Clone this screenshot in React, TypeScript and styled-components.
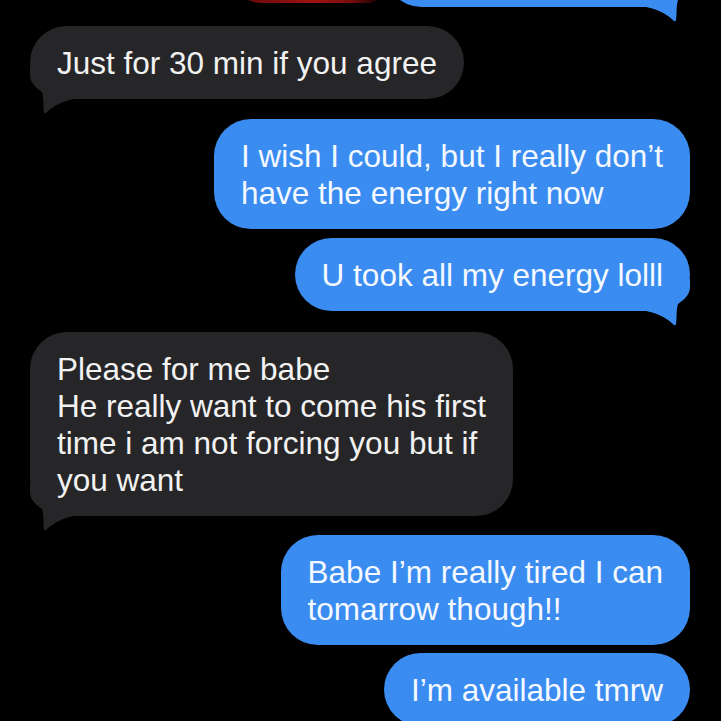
import styled, { createGlobalStyle } from "styled-components";

const BLUE = "#3a8cf0";
const GRAY = "#262628";

const GlobalStyle = createGlobalStyle`
  html, body {
    margin: 0;
    padding: 0;
    background: #000;
  }
  body {
    font-family: "Liberation Sans", Arial, Helvetica, sans-serif;
    -webkit-font-smoothing: antialiased;
  }
`;

const Thread = styled.div`
  width: 721px;
  height: 721px;
  overflow: hidden;
  box-sizing: border-box;
  padding: 0 31px 0 30px;
  display: flex;
  flex-direction: column;
  background: #000;
`;

const Row = styled.div<{ $mine: boolean; $gap: number }>`
  display: flex;
  justify-content: ${(p) => (p.$mine ? "flex-end" : "flex-start")};
  margin-top: ${(p) => p.$gap}px;
  flex-shrink: 0;
`;

// the row cut off by the top edge of the screenshot
const TopRow = styled.div`
  display: flex;
  justify-content: flex-end;
  align-items: flex-start;
  margin-top: -66px;
  flex-shrink: 0;
`;

const RedGlow = styled.div`
  width: 150px;
  height: 69px;
  margin-right: 4px;
  border-radius: 0 0 12px 30px;
  background: linear-gradient(
    90deg,
    rgba(100, 6, 6, 0) 0%,
    #6e0a0a 15%,
    #a01212 55%,
    #7a0c0c 80%,
    rgba(60, 4, 4, 0.3) 100%
  );
`;

const Bubble = styled.div<{ $mine: boolean }>`
  position: relative;
  background: ${(p) => (p.$mine ? BLUE : GRAY)};
  color: ${(p) => (p.$mine ? "#f4f8ff" : "#f2f2f2")};
  border-radius: 37px;
  padding: 19px 27px 17px;
  font-size: 31.5px;
  line-height: 37px;
  white-space: nowrap;
`;

const CutBubble = styled(Bubble)`
  width: 305px;
  height: 73px;
  box-sizing: border-box;
`;

const Text = styled.div`
  position: relative;
  z-index: 1;
`;

const Line = styled.span`
  display: block;
`;

const TailSvg = styled.svg<{ $mine: boolean }>`
  position: absolute;
  z-index: 0;
  bottom: -16px;
  width: 44px;
  height: 48px;
  ${(p) => (p.$mine ? "right: 0;" : "left: 0; transform: scaleX(-1);")}
`;

function Tail({ mine }: { mine: boolean }) {
  return (
    <TailSvg $mine={mine} viewBox="0 0 44 48">
      <path
        d="M44,0 L44,8 C44,17 36,22 32,25 C30,31 31,40 30,45 Q29.5,47 28,46 C22,40 12,34 0,32 L0,0 Z"
        fill={mine ? BLUE : GRAY}
      />
    </TailSvg>
  );
}

interface IMessage {
  mine: boolean;
  lines: string[];
  tail?: boolean;
  gap: number;
}

const messages: IMessage[] = [
  { mine: false, lines: ["Just for 30 min if you agree"], tail: true, gap: 19 },
  {
    mine: true,
    lines: ["I wish I could, but I really don\u2019t", "have the energy right now"],
    gap: 20,
  },
  { mine: true, lines: ["U took all my energy lolll"], tail: true, gap: 9 },
  {
    mine: false,
    lines: [
      "Please for me babe",
      "He really want to come his first",
      "time i am not forcing you but if",
      "you want",
    ],
    tail: true,
    gap: 21,
  },
  {
    mine: true,
    lines: ["Babe I\u2019m really tired I can", "tomarrow though!!"],
    gap: 19,
  },
  { mine: true, lines: ["I\u2019m available tmrw"], gap: 8 },
];

export default function App() {
  return (
    <>
      <GlobalStyle />
      <Thread>
        <TopRow>
          <RedGlow />
          <CutBubble $mine>
            <Tail mine />
          </CutBubble>
        </TopRow>
        {messages.map((m, i) => (
          <Row key={i} $mine={m.mine} $gap={m.gap}>
            <Bubble $mine={m.mine}>
              <Text>
                {m.lines.map((l, j) => (
                  <Line key={j}>{l}</Line>
                ))}
              </Text>
              {m.tail && <Tail mine={m.mine} />}
            </Bubble>
          </Row>
        ))}
      </Thread>
    </>
  );
}
